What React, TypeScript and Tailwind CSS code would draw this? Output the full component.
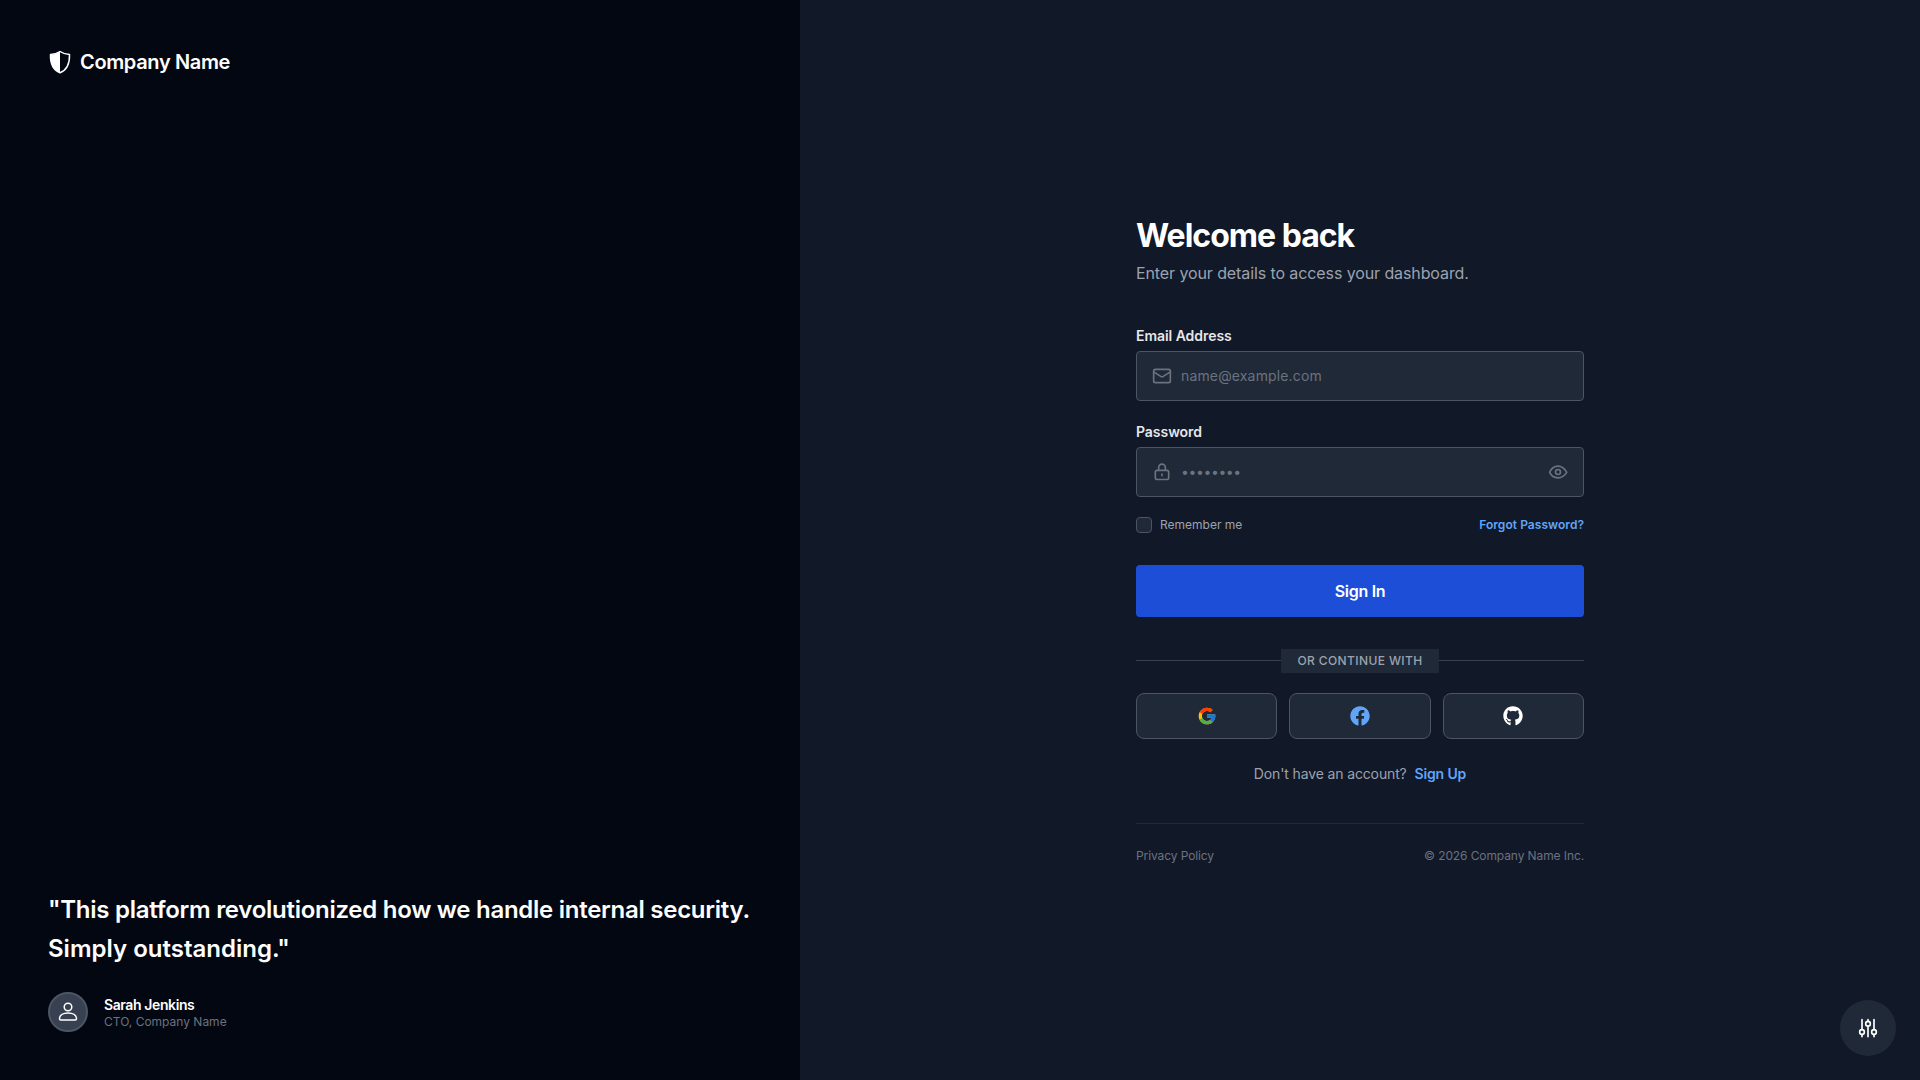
import { FaFacebook, FaGithub } from "react-icons/fa";
import { FcGoogle } from "react-icons/fc";
import { LuMail } from "react-icons/lu";

const font = "font-['Inter','Liberation_Sans',sans-serif]";

const ShieldIcon = () => (
  <svg viewBox="0 0 24 24" className="h-6 w-6 text-white" fill="none">
    <path d="M12 1.5C9.5 3.2 6.5 4.3 2.5 4.5C2.2 13 4 19.5 12 22.8C20 19.5 21.8 13 21.5 4.5C17.5 4.3 14.5 3.2 12 1.5Z" stroke="currentColor" strokeWidth="1.5" strokeLinejoin="round" />
    <path d="M12 1.5C9.5 3.2 6.5 4.3 2.5 4.5C2.2 13 4 19.5 12 22.8Z" fill="currentColor" />
  </svg>
);

const UserIcon = () => (
  <svg viewBox="0 0 24 24" className="h-6 w-6 text-white" fill="none" stroke="currentColor" strokeWidth="1.5" strokeLinejoin="round">
    <circle cx="12" cy="7" r="3.8" />
    <path d="M3.5 18.8C3.5 15 7.5 13 12 13S20.500 15 20.500 18.800C20.500 19.600 20 20 19.200 20H4.800C4 20 3.500 19.600 3.500 18.800Z" />
  </svg>
);

const LockIcon = () => (
  <svg viewBox="0 0 24 24" className="-ml-px h-5 w-5 text-[#6b7280]" fill="none" stroke="currentColor" strokeWidth="2" strokeLinecap="round">
    <rect x="4" y="10" width="16" height="11" rx="2" />
    <path d="M8 10V6.500a4 4 0 0 1 8 0V10" />
    <path d="M12 14.500v2" />
  </svg>
);

const EyeIcon = () => (
  <svg viewBox="0 0 24 24" className="-mr-px h-5 w-5 text-[#6b7280]" fill="none" stroke="currentColor" strokeWidth="2" strokeLinejoin="round">
    <path d="M2 12.500C4 7.500 8 5 12 5C16.500 5 20 8 22.500 12.500C20 16.500 16.500 19 12 19C8 19 4 17 2 12.500Z" />
    <circle cx="12" cy="12" r="3" />
  </svg>
);

const SlidersIcon = () => (
  <svg viewBox="0 0 24 24" className="h-5 w-5 text-white" fill="none" stroke="currentColor" strokeWidth="2" strokeLinecap="round">
    <path d="M4.800 2v11.800M4.800 19.800V22.500M12 2v1.800M12 9.800V22.500M19.200 2v11.800M19.200 19.800V22.500" />
    <circle cx="4.800" cy="16.800" r="2.800" />
    <circle cx="12" cy="6.800" r="2.800" />
    <circle cx="19.200" cy="16.800" r="2.800" />
  </svg>
);

const Left = () => (
  <div className="flex w-[800px] shrink-0 flex-col justify-between bg-[#030712] p-12">
    <div className="flex items-center gap-2">
      <ShieldIcon />
      <span className="text-[20px] leading-7 font-semibold tracking-[-0.35px] text-white">Company Name</span>
    </div>
    <div>
      <p className="text-[24px] leading-[39px] font-semibold tracking-[-0.27px] text-white">
        "This platform revolutionized how we handle internal security.
        <br />
        <span className="tracking-[0px]">Simply outstanding."</span>
      </p>
      <div className="mt-6 flex items-center gap-4">
        <div className="flex h-10 w-10 items-center justify-center rounded-full border-2 border-[#4b5563] bg-[#374151]">
          <UserIcon />
        </div>
        <div className="pt-[1px]">
          <div className="text-[14px] leading-[18px] font-semibold tracking-[-0.4px] text-white">Sarah Jenkins</div>
          <div className="text-[12px] leading-[16px] tracking-[0px] text-[#6b7280]">CTO, Company Name</div>
        </div>
      </div>
    </div>
  </div>
);

const Field = ({ label, children }: { label: string; children: React.ReactNode }) => (
  <div>
    <div className="mb-[5px] text-[14px] leading-5 font-semibold tracking-[-0.05px] text-[#e5e7eb]">{label}</div>
    <div className="flex h-[50px] items-center rounded border border-[#4b5563] bg-[#1f2937] px-4">{children}</div>
  </div>
);

const Social = ({ children }: { children: React.ReactNode }) => (
  <button className="flex h-[46px] flex-1 items-center justify-center rounded-lg border border-[#4b5563] bg-[#1f2937]">
    {children}
  </button>
);

const Form = () => (
  <div className="w-[448px] pb-px">
    <h1 className="text-[32px] leading-10 font-bold tracking-[-1px] text-white">Welcome back</h1>
    <p className="mt-[5px] text-[16px] leading-6 tracking-[-0.1px] text-[#9ca3af]">Enter your details to access your dashboard.</p>

    <div className="mt-[41px] flex flex-col gap-[21px]">
      <Field label="Email Address">
        <LuMail className="-ml-px h-5 w-5 text-[#6b7280]" />
        <span className="ml-[9px] text-[14px] tracking-[0.15px] text-[#6b7280]">name@example.com</span>
      </Field>
      <Field label="Password">
        <LockIcon />
        <span className="ml-[9px] flex-1 text-[14px] tracking-[-0.4px] text-[#6b7280]">••••••••</span>
        <EyeIcon />
      </Field>
    </div>

    <div className="mt-[19px] flex items-center justify-between">
      <label className="flex items-center gap-2">
        <span className="h-4 w-4 rounded border border-[#4b5563] bg-[#1f2937]" />
        <span className="text-[12px] tracking-[0px] text-[#9ca3af]">Remember me</span>
      </label>
      <a className="text-[12px] font-semibold tracking-[0.05px] text-[#60a5fa]">Forgot Password?</a>
    </div>

    <button className="mt-[31px] h-[52px] w-full rounded bg-[#1d4ed8] text-[16px] font-semibold tracking-[-0.3px] text-white">Sign In</button>

    <div className="mt-8 flex items-center">
      <div className="h-px flex-1 bg-[#374151]" />
      <span className="flex h-6 w-[158px] items-center justify-center bg-[#1f2937] text-[12px] font-medium tracking-[0.4px] text-[#9ca3af]">OR CONTINUE WITH</span>
      <div className="h-px flex-1 bg-[#374151]" />
    </div>

    <div className="mt-[20px] flex gap-3">
      <Social><FcGoogle className="h-5 w-5" /></Social>
      <Social><FaFacebook className="h-5 w-5 text-[#60a5fa]" /></Social>
      <Social><FaGithub className="h-5 w-5 text-white" /></Social>
    </div>

    <p className="mt-[25px] text-center text-[14px] leading-5 tracking-[-0.13px] text-[#9ca3af]">
      Don't have an account? <a className="ml-1 font-semibold text-[#60a5fa]">Sign Up</a>
    </p>

    <div className="mt-[39px] flex items-center justify-between border-t border-[#1f2937] pt-6 text-[12px] leading-4 tracking-[-0.1px] text-[#6b7280]">
      <a>Privacy Policy</a>
      <span>© 2026 Company Name Inc.</span>
    </div>
  </div>
);

export default function App() {
  return (
    <div className={`relative flex h-screen w-full overflow-hidden bg-[#111827] ${font}`}>
      <Left />
      <div className="flex flex-1 items-center justify-center">
        <Form />
      </div>
      <button className="absolute right-6 bottom-6 flex h-14 w-14 items-center justify-center rounded-full bg-[#1f2937]">
        <SlidersIcon />
      </button>
    </div>
  );
}
